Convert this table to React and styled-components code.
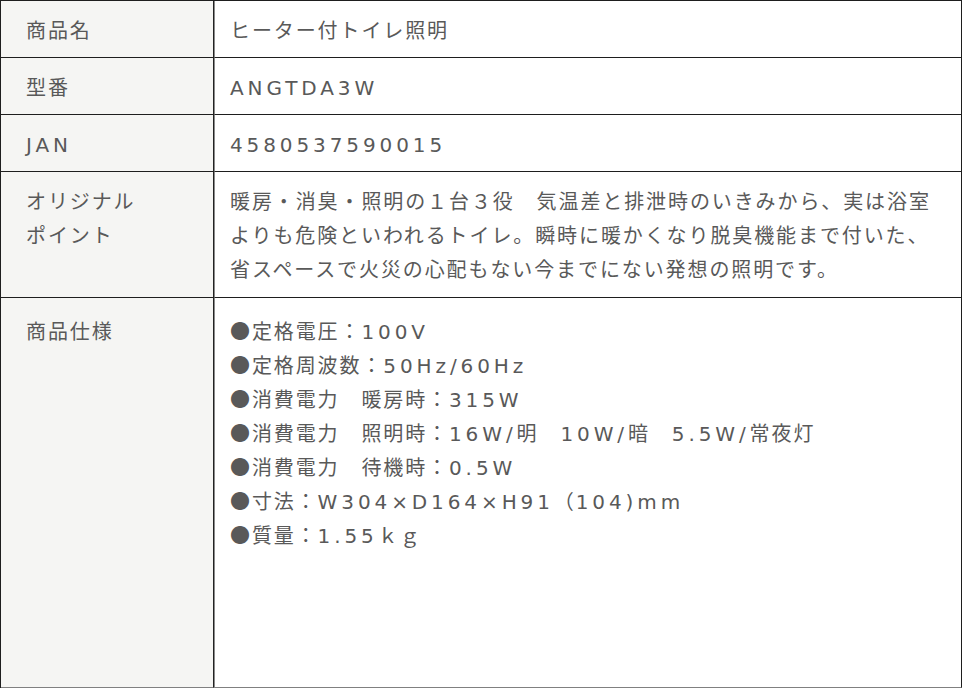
import React from 'react';
import styled, { createGlobalStyle } from 'styled-components';

const Global = createGlobalStyle`
  html, body { margin: 0; padding: 0; background: #fff; }
  body { width: 962px; height: 688px; overflow: hidden; }
`;

const Table = styled.div`
  display: grid;
  grid-template-columns: 213px 1fr;
  width: 962px;
  box-sizing: border-box;
  border-top: 1px solid #1e1e1e;
  border-left: 1px solid #1e1e1e;
  font-family: "Noto Sans CJK JP", "Noto Sans", sans-serif;
  font-size: 20px;
  line-height: 34px;
  letter-spacing: 1.9px;
  color: #595959;
`;

const Head = styled.div`
  box-sizing: border-box;
  background: #f5f5f3;
  border-right: 1px solid #222;
  border-bottom: 1px solid ${p => (p.$last ? '#808080' : '#1e1e1e')};
  padding: ${p => (p.$spec ? '16px' : '12px')} 10px ${p => (p.$multi ? '11px' : '10px')} 25px;
  min-height: ${p => (p.$last ? '390px' : 'auto')};
`;

const Cell = styled.div`
  box-sizing: border-box;
  background: #fff;
  border-left: 1px solid #8a8a8a;
  border-right: 1px solid #1e1e1e;
  border-bottom: 1px solid ${p => (p.$last ? '#808080' : '#1e1e1e')};
  padding: ${p => (p.$spec ? '16px' : '12px')} 10px ${p => (p.$multi ? '11px' : '10px')} 15px;
  min-height: ${p => (p.$last ? '390px' : 'auto')};
`;

const Lat = styled.span`
  font-family: "DejaVu Sans", "Noto Sans", sans-serif;
  font-size: 20px;
  line-height: 1;
  letter-spacing: 3.9px;
`;

const SpecLine = styled.div`
  white-space: nowrap;
  height: 34px;
`;

const split = (s) =>
  s.split(/([A-Za-z0-9.\/()×]+)/).map((part, i) =>
    /^[A-Za-z0-9.\/()×]+$/.test(part) ? <Lat key={i}>{part}</Lat> : <React.Fragment key={i}>{part}</React.Fragment>
  );

const specs = [
  '●定格電圧：100V',
  '●定格周波数：50Hz/60Hz',
  '●消費電力　暖房時：315W',
  '●消費電力　照明時：16W/明　10W/暗　5.5W/常夜灯',
  '●消費電力　待機時：0.5W',
  '●寸法：W304×D164×H91（104)mm',
  '●質量：1.55ｋｇ',
];

export default function App() {
  return (
    <>
      <Global />
      <Table>
        <Head>商品名</Head>
        <Cell>ヒーター付トイレ照明</Cell>

        <Head>型番</Head>
        <Cell>{split('ANGTDA3W')}</Cell>

        <Head>{split('JAN')}</Head>
        <Cell>{split('4580537590015')}</Cell>

        <Head $multi>オリジナル<br />ポイント</Head>
        <Cell $multi>
          暖房・消臭・照明の１台３役　気温差と排泄時のいきみから、実は浴室<br />
          よりも危険といわれるトイレ。瞬時に暖かくなり脱臭機能まで付いた、<br />
          省スペースで火災の心配もない今までにない発想の照明です。
        </Cell>

        <Head $spec $last>商品仕様</Head>
        <Cell $spec $last>
          {specs.map((s) => (
            <SpecLine key={s}>{split(s)}</SpecLine>
          ))}
        </Cell>
      </Table>
    </>
  );
}
